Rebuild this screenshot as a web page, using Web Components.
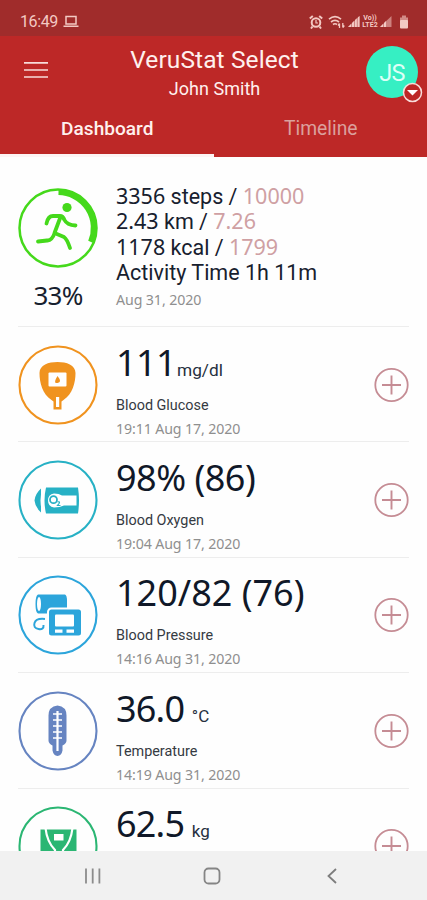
<!DOCTYPE html>
<html lang="en">
<head>
<meta charset="utf-8">
<meta name="viewport" content="width=device-width, initial-scale=1">
<title>VeruStat Select</title>
<style>
  :root {
    --color-header: #bd2827;
    --color-status: #a02c2b;
    --color-text: #17202e;
    --color-muted: #8f8f8f;
    --color-target: #cfa0a3;
    --font-ui: Roboto, "Liberation Sans", sans-serif;
    --font-num: "Noto Sans", "Open Sans", sans-serif;
  }

  body {
    margin: 0;
    overflow: hidden;
    background: #fefefe;
    color: var(--color-text);
    font-family: var(--font-ui);
  }
</style>
</head>
<body>
<health-app></health-app>

<script>
/* Phone status bar: clock on the left, system icons on the right */
class StatusBar extends HTMLElement {
  constructor() {
    super();
    this.attachShadow({ mode: 'open' });
  }

  connectedCallback() {
    this.shadowRoot.innerHTML = `
      <style>
        :host {
          display: flex;
          align-items: center;
          justify-content: space-between;
          box-sizing: border-box;
          height: 36px;
          padding: 7px 18px 0 20px;
          background: var(--color-status);
          color: #f3c9c3;
          font-size: 16px;
          letter-spacing: -0.4px;
        }
        .left { display: flex; align-items: center; gap: 5px; }
        .right { display: flex; align-items: center; }
        svg { display: block; }
        .volte {
          display: flex;
          flex-direction: column;
          align-items: center;
          font: bold 7px/7px Roboto, sans-serif;
          letter-spacing: 0;
          width: 20px;
        }
      </style>
      <div class="left">
        <span>16:49</span>
        <svg width="16" height="13" fill="none" stroke="currentColor" stroke-width="1.500"><path d="M3 1.500h10v7.500H3zM.5 11.200h15"/></svg>
      </div>
      <div class="right">
        <svg width="14" height="14" fill="none" stroke="currentColor" stroke-width="2"><circle cx="7" cy="7.500" r="4.300"/><path d="M.8 3.500l3-2.500M13.200 3.500l-3-2.500M3.500 11.500l-1.500 2M10.500 11.500l1.500 2"/><path stroke-width="1.200" d="M7 5v3h2"/></svg>
        <svg style="margin-left:5px" width="17" height="14" fill="none" stroke="currentColor" stroke-width="1.700"><path d="M1 4.200Q7 -.8 13 4.200M3 7Q7 3.800 11 7M5 9.500Q7 8 9 9.500"/><path stroke-width="1.300" d="M11.500 13V8.500M14.800 8v4.500M10 10.500l1.500-2M16.300 10.500l-1.500 2"/></svg>
        <svg style="margin-left:3px" width="12" height="13" fill="currentColor"><path opacity=".55" d="M0 12L11.500 1v11z"/><path d="M0 12l3-3v3zM4 8l2-2v6H4zM7 5l1.800-1.800V12H7zM9.800 2.500l1.700-1.500v11H9.800z"/></svg>
        <div class="volte"><span>Vo))</span><span>LTE2</span></div>
        <svg width="12" height="13" fill="currentColor"><path opacity=".55" d="M0 12L11.500 1v11z"/><path d="M0 12l3-3v3zM4 8l2-2v6H4z"/></svg>
        <svg style="margin-left:7px" width="10" height="14" fill="currentColor"><path opacity=".6" d="M3 .5h4v2h2v4H1v-4h2z"/><rect x="1" y="5" width="8" height="8.500" rx="1"/></svg>
      </div>
    `;
  }
}

/* App header: menu button, title, avatar badge and tabs */
class AppHeader extends HTMLElement {
  constructor() {
    super();
    this.attachShadow({ mode: 'open' });
  }

  connectedCallback() {
    this.shadowRoot.innerHTML = `
      <style>
        :host {
          display: flex;
          flex-direction: column;
          height: 120.500px;
          background: var(--color-header);
          color: #fff0ee;
        }
        .bar {
          display: grid;
          grid-template-columns: 62px 1fr 61px;
          height: 68px;
        }
        .menu { padding: 25px 0 0 24px; }
        .menu svg { display: block; }
        .titles { text-align: center; padding: 9px 0 0 1px; }
        .title { font-size: 24.500px; line-height: 29px; letter-spacing: .1px; }
        .subtitle { font-size: 18px; line-height: 29px; letter-spacing: .04px; }
        .avatar {
          position: relative;
          width: 52px;
          height: 52px;
          margin-top: 9.500px;
          border-radius: 50%;
          background: #36efc3;
          color: #dcfff6;
          font-size: 23.500px;
          letter-spacing: -.6px;
          line-height: 55px;
          text-align: center;
        }
        .avatar svg { position: absolute; left: 36px; top: 36px; }
        .tabs { display: flex; flex: 1; }
        .tab {
          flex: 1;
          box-sizing: border-box;
          padding-left: 1px;
          text-align: center;
          font-size: 19.300px;
          line-height: 50px;
          color: #dba09d;
        }
        .tab.active { color: #fff0ee; font-weight: 500; font-size: 19.100px; border-bottom: 3px solid #fdf4f4; }
      </style>
      <div class="bar">
        <div class="menu"><svg width="24" height="18" stroke="#f8dcda" stroke-width="1.700"><path d="M0 1.800h24M0 9h24M0 16h24"/></svg></div>
        <div class="titles">
          <div class="title">VeruStat Select</div>
          <div class="subtitle">John Smith</div>
        </div>
        <div class="avatar">JS
          <svg width="21" height="21"><circle cx="10.500" cy="10.500" r="9" fill="#bd2827" stroke="#f8dcda" stroke-width="1.500"/><path d="M5 8h11l-5.500 5.500z" fill="#fff"/></svg>
        </div>
      </div>
      <div class="tabs">
        <div class="tab active">Dashboard</div>
        <div class="tab">Timeline</div>
      </div>
    `;
  }
}

/* Daily activity summary with the progress ring */
class ActivityCard extends HTMLElement {
  constructor() {
    super();
    this.attachShadow({ mode: 'open' });
  }

  connectedCallback() {
    this.shadowRoot.innerHTML = `
      <style>
        :host {
          display: flex;
          box-sizing: border-box;
          height: 170.500px;
          margin: 0 18px;
          border-bottom: 1.500px solid #ededed;
        }
        .progress { width: 80px; margin-top: 30px; text-align: center; }
        .progress svg { display: block; }
        .percent { font: 26px/32px var(--font-num); letter-spacing: -.8px; margin-top: 10px; }
        .stats { margin: 26px 0 0 18px; font-size: 21.500px; line-height: 25.700px; white-space: nowrap; }
        .stats div { height: 25.700px; }
        .num { font-family: var(--font-num); }
        .target { font-family: var(--font-num); color: var(--color-target); }
        .stats .date { font: 14.200px/29px var(--font-num); letter-spacing: -.1px; height: 29px; color: var(--color-muted); }
      </style>
      <div class="progress">
        <svg width="80" height="82" viewBox="0 0 80 82" fill="none" stroke="#45d91b" stroke-linecap="round" stroke-linejoin="round">
          <circle cx="40" cy="41" r="38.500" stroke-width="2.500"/>
          <path d="M40.500 5A36 36 0 0 1 73 55" stroke-width="6" stroke-linecap="butt"/>
          <circle cx="49" cy="20.500" r="4.600" fill="#45d91b" stroke="none"/>
          <path stroke-width="3.800" d="M28.500 36.500Q30 29 35 29H42Q45 29 46.500 33Q49 38 57.500 38.500M42.500 30L36.500 46L46 50Q49 52 52 61M37 45Q34 54 29 53.500L20 54.500"/>
        </svg>
        <div class="percent">33%</div>
      </div>
      <div class="stats">
        <div><span class="num">3356</span> steps / <span class="target">10000</span></div>
        <div><span class="num">2.43</span> km / <span class="target">7.26</span></div>
        <div><span class="num">1178</span> kcal / <span class="target">1799</span></div>
        <div>Activity Time 1h 11m</div>
        <div class="date">Aug 31, 2020</div>
      </div>
    `;
  }
}

/* Round outline with the pictogram of one measurement */
const ICONS = {
  glucose: {
    color: '#f0931f',
    body: `
      <path fill="currentColor" d="M39.500 17c9 0 18 3 18 11c0 10-3 21-12 27l-2 1.500v8h-8v-8l-2-1.500c-9-6-12-17-12-27c0-8 9-11 18-11z"/>
      <rect x="30.500" y="27.500" width="18" height="14" rx="1" fill="#fff"/>
      <path fill="currentColor" d="M39.500 31q5 6 0 7t0-7z"/>
      <path fill="#fff" d="M38 52h3.200v10H38z"/>`
  },
  oxygen: {
    color: '#27b1c5',
    body: `
      <path fill="currentColor" d="M28 27.500h32q2 13 0 26H28q-3-13 0-26zM23 28.500v24Q17 47 16.500 40.500Q17 34 23 28.500z"/>
      <path fill="none" stroke="#fff" stroke-width="2" d="M25.500 28q-4 12.500 0 25"/>
      <path fill="#fff" d="M36 33.500q5 0 8 2h14.500v10H46q-4 2-10 2q-6-1-6-7t6-7z"/>
      <circle cx="35.500" cy="39.700" r="3.500" fill="none" stroke="currentColor" stroke-width="1.800"/>
      <path fill="none" stroke="currentColor" stroke-width="1.200" d="M39.500 42q3-1 1.500 1.500l-1.500 2h3"/>`
  },
  pressure: {
    color: '#2ca5db',
    body: `
      <path fill="currentColor" d="M20 19.500h27q2 1 2 6v13H20q-2.500-1-2.500-9.500T20 19.500z"/>
      <ellipse cx="21" cy="29" rx="2" ry="7" fill="#fff"/>
      <path fill="none" stroke="currentColor" stroke-width="2" d="M27 44q-9-1-10.500 4t4 6t5-4"/>
      <rect x="30" y="33.500" width="34" height="28" rx="3.500" fill="currentColor" stroke="#fff" stroke-width="2"/>
      <rect x="37" y="39.500" width="19" height="12" rx="1" fill="#fff"/>
      <path fill="#fff" d="M37 54.500h7.500v3.200H37zM48.500 54.500h7.500v3.200h-7.500z"/>`
  },
  temperature: {
    color: '#6684c1',
    body: `
      <path fill="currentColor" d="M39.500 14.500q9 1 9 10v25q0 3-4 5v5q-1 5-5 5.500q-4-.5-5-5.500v-5q-4-2-4-5v-25q0-9 9-10z"/>
      <path fill="none" stroke="#fff" stroke-width="2.200" d="M39.500 20v40"/>
      <path stroke="#fff" stroke-width="1.700" d="M35 23h9M35 29h9M35 35h9M35 41h9M35 47h9"/>`
  },
  weight: {
    color: '#2bb673',
    body: `
      <path fill="currentColor" d="M22.500 23.500h36v34h-36z"/>
      <path fill="none" stroke="#fff" stroke-width="2.200" d="M27.500 22q1.500 14 9.500 22v15M54.500 22q-1.500 14-9.500 22v15"/>
      <rect x="36" y="28" width="9.500" height="6.500" fill="#fff"/>`
  }
};

class MeasureIcon extends HTMLElement {
  constructor() {
    super();
    this.attachShadow({ mode: 'open' });
  }

  connectedCallback() {
    const icon = ICONS[this.getAttribute('name')];
    this.shadowRoot.innerHTML = `
      <style>
        :host { display: block; width: 80px; height: 80px; color: ${icon.color}; }
        svg { display: block; }
      </style>
      <svg width="80" height="80" viewBox="0 0 80 80">
        <circle cx="40" cy="40" r="38.500" fill="none" stroke="currentColor" stroke-width="2.100"/>
        ${icon.body}
      </svg>
    `;
  }
}

/* One measurement row; the value and unit are slotted */
class MeasureRow extends HTMLElement {
  constructor() {
    super();
    this.attachShadow({ mode: 'open' });
  }

  connectedCallback() {
    const label = this.getAttribute('label');
    const date = this.getAttribute('date');

    this.shadowRoot.innerHTML = `
      <style>
        :host {
          display: flex;
          flex-shrink: 0;
          box-sizing: border-box;
          height: 115.400px;
          margin: 0 18px;
          border-bottom: 1px solid #ededed;
        }
        measure-icon { margin-top: 17.500px; }
        .info { flex: 1; margin: 13.500px 0 0 18px; white-space: nowrap; }
        .value {
          font: 370 36px/44px var(--font-num);
          letter-spacing: var(--value-spacing, 0);
          height: 44px;
          color: #101828;
        }
        ::slotted([slot="unit"]) {
          font: var(--unit-size, 17.300px)/20px var(--font-ui);
          letter-spacing: 0;
          margin-left: var(--unit-gap, 0);
          color: #263040;
        }
        .label { font-size: 14.400px; line-height: 24px; margin-top: 9px; color: #353a42; }
        .date { font: 14.200px/22px var(--font-num); letter-spacing: -.12px; color: var(--color-muted); }
        .add { margin-top: 39.500px; }
        .add svg { display: block; }
      </style>
      <measure-icon name="${this.getAttribute('icon')}"></measure-icon>
      <div class="info">
        <div class="value"><slot></slot><slot name="unit"></slot></div>
        ${label ? `<div class="label">${label}</div>` : ''}
        ${date ? `<div class="date">${date}</div>` : ''}
      </div>
      <div class="add">
        <svg width="35" height="36" fill="none" stroke="#c58c94"><circle cx="17.500" cy="18" r="16.200" stroke-width="1.800"/><path stroke-width="1.900" d="M8 18h19M17.500 8.500v19"/></svg>
      </div>
    `;
  }
}

/* Android navigation bar */
class NavBar extends HTMLElement {
  constructor() {
    super();
    this.attachShadow({ mode: 'open' });
  }

  connectedCallback() {
    this.shadowRoot.innerHTML = `
      <style>
        :host {
          display: flex;
          align-items: center;
          box-sizing: border-box;
          height: 49px;
          padding: 1px 0 0 83px;
          gap: 100px;
          background: #f1f1f1;
        }
        svg { display: block; }
        .home { margin-right: 5px; }
      </style>
      <svg width="20" height="18" fill="none" stroke="#8c8c8c" stroke-width="1.800"><path d="M3 1.500v15M9.700 1.500v15M16.400 1.500v15"/></svg>
      <svg class="home" width="18" height="18" fill="none" stroke="#858585" stroke-width="1.800"><rect x="1.500" y="1.500" width="15" height="15" rx="4"/></svg>
      <svg width="12" height="18" fill="none" stroke="#7d7d7d" stroke-width="1.800"><path d="M10 2L2.500 9l7.500 7"/></svg>
    `;
  }
}

class HealthApp extends HTMLElement {
  constructor() {
    super();
    this.attachShadow({ mode: 'open' });
  }

  connectedCallback() {
    this.shadowRoot.innerHTML = `
      <style>
        :host { display: flex; flex-direction: column; height: 900px; }
        status-bar, app-header, nav-bar { flex-shrink: 0; }
        main { flex: 1; min-height: 0; overflow: hidden; }
        [icon="glucose"] { --value-spacing: -.6px; --unit-gap: 1px; }
        [icon="oxygen"] { --value-spacing: -.5px; }
        [icon="temperature"], [icon="weight"] { --value-spacing: -.8px; --unit-size: 17px; --unit-gap: -1px; }
      </style>
      <status-bar></status-bar>
      <app-header></app-header>
      <main>
        <activity-card></activity-card>
        <measure-row icon="glucose" label="Blood Glucose" date="19:11 Aug 17, 2020">111<span slot="unit">mg/dl</span></measure-row>
        <measure-row icon="oxygen" label="Blood Oxygen" date="19:04 Aug 17, 2020">98% (86)</measure-row>
        <measure-row icon="pressure" label="Blood Pressure" date="14:16 Aug 31, 2020">120/82 (76)</measure-row>
        <measure-row icon="temperature" label="Temperature" date="14:19 Aug 31, 2020">36.0 <span slot="unit">°C</span></measure-row>
        <measure-row icon="weight">62.5 <span slot="unit">kg</span></measure-row>
      </main>
      <nav-bar></nav-bar>
    `;
  }
}

customElements.define('status-bar', StatusBar);
customElements.define('app-header', AppHeader);
customElements.define('activity-card', ActivityCard);
customElements.define('measure-icon', MeasureIcon);
customElements.define('measure-row', MeasureRow);
customElements.define('nav-bar', NavBar);
customElements.define('health-app', HealthApp);
</script>
</body>
</html>
